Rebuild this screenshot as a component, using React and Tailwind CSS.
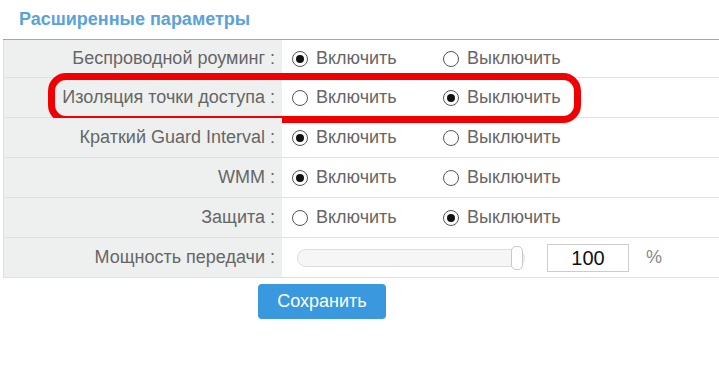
import React from 'react';

const rows = [
  { label: 'Беспроводной роуминг :', on: true },
  { label: 'Изоляция точки доступа :', on: false, marked: true },
  { label: 'Краткий Guard Interval :', on: true },
  { label: 'WMM :', on: true },
  { label: 'Защита :', on: false },
];

const Radio = ({ checked }) => (
  <span className="w-[16px] h-[16px] rounded-full border-[1.5px] border-[#555] flex items-center justify-center shrink-0">
    {checked && <span className="w-[8px] h-[8px] rounded-full bg-[#111]" />}
  </span>
);

const Option = ({ checked, text, wide }) => (
  <div className={`flex items-center gap-[8px] ${wide ? 'w-[151px]' : ''}`}>
    <Radio checked={checked} />
    <span>{text}</span>
  </div>
);

const App = () => {
  return (
    <div className="w-[719px] h-[365px] bg-white text-[18px] text-[#666]" style={{ fontFamily: '"Liberation Sans", Arial, sans-serif' }}>
      {/* Section title */}
      <div className="h-[39px] pl-[19px] flex items-center">
        <h2 className="font-bold text-[18px] text-[#5aa2da]">Расширенные параметры</h2>
      </div>

      <div className="ml-[3px] border-t border-[#7eb0db]">
        {rows.map((row, idx) => (
          <div key={idx} className="relative flex h-[40px] border-b border-[#e0e0e0] first:h-[38px]">
            <div className="w-[279px] bg-[#eef0f0] border-l border-[#e0e0e0] flex items-center justify-end pr-[7px]">
              {row.label}
            </div>
            <div className="flex items-center pl-[10px]">
              <Option checked={row.on} text="Включить" wide />
              <Option checked={!row.on} text="Выключить" />
            </div>
            {row.marked && (
              <div className="absolute left-[45px] top-[-5px] w-[533px] h-[50px] rounded-[18px] border-[7px] border-[#f00000]" />
            )}
          </div>
        ))}

        {/* Transmit power */}
        <div className="flex h-[40px] border-b border-[#e0e0e0]">
          <div className="w-[279px] bg-[#eef0f0] border-l border-[#e0e0e0] flex items-center justify-end pr-[7px]">
            Мощность передачи :
          </div>
          <div className="flex items-center pl-[15px]">
            <div className="relative w-[228px] h-[18px] rounded-full border border-[#ddd] bg-[#f6f6f6]">
              <div className="absolute right-[1px] top-[-4px] w-[12px] h-[24px] rounded-[5px] border border-[#c8c8c8] bg-white" />
            </div>
            <div className="ml-[22px] w-[82px] h-[28px] border border-[#ccc] flex items-center justify-center text-[20px] text-[#111]">
              100
            </div>
            <span className="ml-[17px] text-[#888]">%</span>
          </div>
        </div>
      </div>

      <div className="pl-[258px] pt-[6px]">
        <button className="w-[128px] h-[35px] rounded-[4px] bg-[#3a98de] text-white text-[18px]">
          Сохранить
        </button>
      </div>
    </div>
  );
};

export default App;
